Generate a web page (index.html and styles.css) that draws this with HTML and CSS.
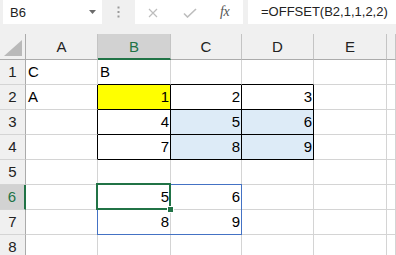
FILE: index.html
```html
<!DOCTYPE html>
<html>
<head>
<meta charset="utf-8">
<link rel="stylesheet" href="styles.css">
</head>
<body>
<div class="topbar">
  <div class="namebox">
    <span class="nb-text">B6</span>
    <svg class="nb-arrow" width="7" height="4" viewBox="0 0 7 4"><path d="M0 0H7L3.5 4Z" fill="#6b6b6b"/></svg>
  </div>
  <div class="grip">
    <svg width="3" height="12" viewBox="0 0 3 12"><rect x="0.5" y="0.5" width="2" height="2" fill="#9a9a9a"/><rect x="0.5" y="5" width="2" height="2" fill="#9a9a9a"/><rect x="0.5" y="9.5" width="2" height="2" fill="#9a9a9a"/></svg>
  </div>
  <div class="tools">
    <svg class="ic-x" width="10" height="10" viewBox="0 0 10 10"><path d="M1 1L9 9M9 1L1 9" stroke="#bdbdbd" stroke-width="1.2" fill="none"/></svg>
    <svg class="ic-ok" width="14" height="10" viewBox="0 0 14 10"><path d="M1 5.5L4.5 9L13 1" stroke="#bdbdbd" stroke-width="1.6" fill="none"/></svg>
    <span class="fx">fx</span>
  </div>
  <div class="formula">=OFFSET(B2,1,1,2,2)</div>
</div>
<div class="sheet">
  <div class="corner"><svg width="18" height="16" viewBox="0 0 18 16"><path d="M18 0V16H0Z" fill="#b9b9b9"/></svg></div>
  <div class="hdr">A</div>
  <div class="hdr sel">B</div>
  <div class="hdr">C</div>
  <div class="hdr">D</div>
  <div class="hdr">E</div>
  <div class="hdr"></div>

  <div class="rh">1</div>
  <div class="cell txt">C</div>
  <div class="cell txt bb">B</div>
  <div class="cell bb"></div>
  <div class="cell bb"></div>
  <div class="cell"></div>
  <div class="cell"></div>

  <div class="rh">2</div>
  <div class="cell txt br">A</div>
  <div class="cell num bk yellow">1</div>
  <div class="cell num bk">2</div>
  <div class="cell num bk">3</div>
  <div class="cell"></div>
  <div class="cell"></div>

  <div class="rh">3</div>
  <div class="cell br"></div>
  <div class="cell num bk">4</div>
  <div class="cell num bk blue">5</div>
  <div class="cell num bk blue">6</div>
  <div class="cell"></div>
  <div class="cell"></div>

  <div class="rh">4</div>
  <div class="cell br"></div>
  <div class="cell num bk">7</div>
  <div class="cell num bk blue">8</div>
  <div class="cell num bk blue">9</div>
  <div class="cell"></div>
  <div class="cell"></div>

  <div class="rh">5</div>
  <div class="cell"></div>
  <div class="cell"></div>
  <div class="cell"></div>
  <div class="cell"></div>
  <div class="cell"></div>
  <div class="cell"></div>

  <div class="rh rsel">6</div>
  <div class="cell"></div>
  <div class="cell num active">5
    <div class="spill"></div>
    <div class="selbox"><div class="handle"></div></div>
  </div>
  <div class="cell num">6</div>
  <div class="cell"></div>
  <div class="cell"></div>
  <div class="cell"></div>

  <div class="rh">7</div>
  <div class="cell"></div>
  <div class="cell num">8</div>
  <div class="cell num">9</div>
  <div class="cell"></div>
  <div class="cell"></div>
  <div class="cell"></div>

  <div class="rh">8</div>
  <div class="cell"></div>
  <div class="cell"></div>
  <div class="cell"></div>
  <div class="cell"></div>
  <div class="cell"></div>
  <div class="cell"></div>
</div>
</body>
</html>
```

FILE: styles.css
```css
html, body {
  margin: 0;
  padding: 0;
  width: 396px;
  height: 255px;
  overflow: hidden;
  background: #f0f0f0;
  font-family: "Liberation Sans", Arial, sans-serif;
}

.topbar {
  height: 34px;
  display: flex;
  align-items: flex-start;
  box-sizing: border-box;
}

.namebox {
  margin-left: 3px;
  width: 99px;
  height: 24px;
  background: #ffffff;
  display: flex;
  align-items: center;
  box-sizing: border-box;
  padding-left: 7px;
  padding-right: 6px;
}

.nb-text {
  font-size: 13px;
  color: #222;
  flex: 1;
}

.nb-arrow {
  display: block;
}

.grip {
  width: 33px;
  height: 24px;
  display: flex;
  align-items: center;
  justify-content: center;
}

.grip svg {
  display: block;
  margin-left: 0px;
}

.tools {
  width: 108px;
  height: 24px;
  background: #ffffff;
  display: flex;
  align-items: center;
  box-sizing: border-box;
  padding-left: 13px;
}

.ic-x { display: block; margin-top: 1px; }
.ic-ok { display: block; margin-left: 25px; margin-top: 1px; }

.fx {
  margin-left: 23px;
  font-family: "Liberation Serif", "Times New Roman", serif;
  font-style: italic;
  font-size: 14px;
  color: #555;
  letter-spacing: -0.5px;
}

.formula {
  margin-left: 5px;
  flex: 1;
  height: 24px;
  background: #ffffff;
  font-size: 13px;
  line-height: 24px;
  padding-left: 13px;
  color: #222;
}

.sheet {
  display: grid;
  grid-template-columns: 26px 72px 73px 71px 72px 73px 1fr;
  grid-template-rows: 26px repeat(8, 25px);
  background: #ffffff;
}

.corner {
  background: #f0f0f0;
  border-right: 1px solid #ababab;
  border-bottom: 1px solid #ababab;
  box-sizing: border-box;
  display: flex;
  align-items: flex-end;
  justify-content: flex-end;
  padding: 0 3px 3px 0;
}

.corner svg { display: block; }

.hdr {
  background: #f0f0f0;
  border-right: 1px solid #c4c4c4;
  border-bottom: 1px solid #ababab;
  box-sizing: border-box;
  text-align: center;
  font-size: 15px;
  line-height: 25px;
  color: #222;
}

.hdr.sel {
  background: #d2d2d2;
  color: #217346;
  border-bottom: 2px solid #217346;
}

.rh {
  background: #f0f0f0;
  border-right: 1px solid #ababab;
  border-bottom: 1px solid #d4d4d4;
  box-sizing: border-box;
  text-align: center;
  font-size: 15px;
  line-height: 24px;
  color: #222;
}

.rh.rsel {
  background: #d2d2d2;
  color: #217346;
  border-right: 2px solid #217346;
}

.cell {
  border-right: 1px solid #d4d4d4;
  border-bottom: 1px solid #d4d4d4;
  box-sizing: border-box;
  font-size: 15px;
  line-height: 24px;
  color: #000;
  white-space: nowrap;
}

.txt { padding-left: 2px; }
.num { text-align: right; padding-right: 1px; }

.bb { border-bottom-color: #000; }
.br { border-right-color: #000; }
.bk { border-right-color: #000; border-bottom-color: #000; }

.yellow { background: #ffff00; }
.blue { background: #ddebf7; }

.active { position: relative; }

.spill {
  position: absolute;
  left: -1px;
  top: -1px;
  width: 145px;
  height: 51px;
  border: 1px solid #4472c4;
  box-sizing: border-box;
  pointer-events: none;
}

.selbox {
  position: absolute;
  left: -2px;
  top: -2px;
  right: -1px;
  bottom: -1px;
  border: 2px solid #217346;
  pointer-events: none;
}

.handle {
  position: absolute;
  right: -5px;
  bottom: -5px;
  width: 5px;
  height: 5px;
  background: #217346;
  border: 1px solid #ffffff;
}
```
